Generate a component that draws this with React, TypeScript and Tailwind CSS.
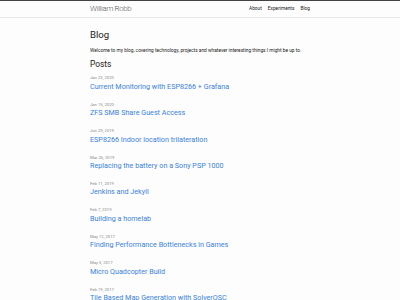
const POSTS = [
  { date: "Jan 23, 2020", title: "Current Monitoring with ESP8266 + Grafana" },
  { date: "Jan 15, 2020", title: "ZFS SMB Share Guest Access" },
  { date: "Jun 29, 2019", title: "ESP8266 Indoor location trilateration" },
  { date: "Mar 26, 2019", title: "Replacing the battery on a Sony PSP 1000" },
  { date: "Feb 11, 2019", title: "Jenkins and Jekyll" },
  { date: "Feb 7, 2019", title: "Building a homelab" },
  { date: "May 12, 2017", title: "Finding Performance Bottlenecks in Games" },
  { date: "May 5, 2017", title: "Micro Quadcopter Build" },
  { date: "Feb 19, 2017", title: "Tile Based Map Generation with SolverOSC" },
];

export default function App() {
  return (
    <div
      className="h-[300px] overflow-hidden bg-[#fdfdfd] text-[#222]"
      style={{ fontFamily: "Roboto, 'Liberation Sans', sans-serif" }}
    >
      <header className="border-t-[1.5px] border-b border-t-[#424242] border-b-[#e8e8e8] min-h-[16.8px]">
        <div className="w-[220px] mx-auto flex items-center justify-between h-[16.2px]">
          <span className="text-[7.8px] font-light tracking-[-0.3px] text-[#555] leading-[16.2px]">
            William Robb
          </span>
          <nav className="flex text-[4.8px] leading-[7.2px]">
            <span className="ml-[6px]">About</span>
            <span className="ml-[6px]">Experiments</span>
            <span className="ml-[6px]">Blog</span>
          </nav>
        </div>
      </header>

      <main className="w-[220px] mx-auto pt-[9.6px]">
        <h1 className="text-[9.6px] leading-[14.4px] mb-[4.5px]">Blog</h1>
        <p className="text-[4.8px] leading-[7.2px] mb-[4.5px]">
          Welcome to my blog, covering technology, projects and whatever interesting things I might be up to.
        </p>
        <h2 className="text-[8.4px] leading-[12.6px] mb-[4.5px]">Posts</h2>
        <ul>
          {POSTS.map((p, i) => (
            <li key={i} className="mb-[9.3px]">
              <div className="text-[4.2px] leading-[6.3px] text-[#8a8a8a]">{p.date}</div>
              <div className="text-[7.2px] leading-[10.8px] text-[#3a82dc]">{p.title}</div>
            </li>
          ))}
        </ul>
      </main>
    </div>
  );
}
